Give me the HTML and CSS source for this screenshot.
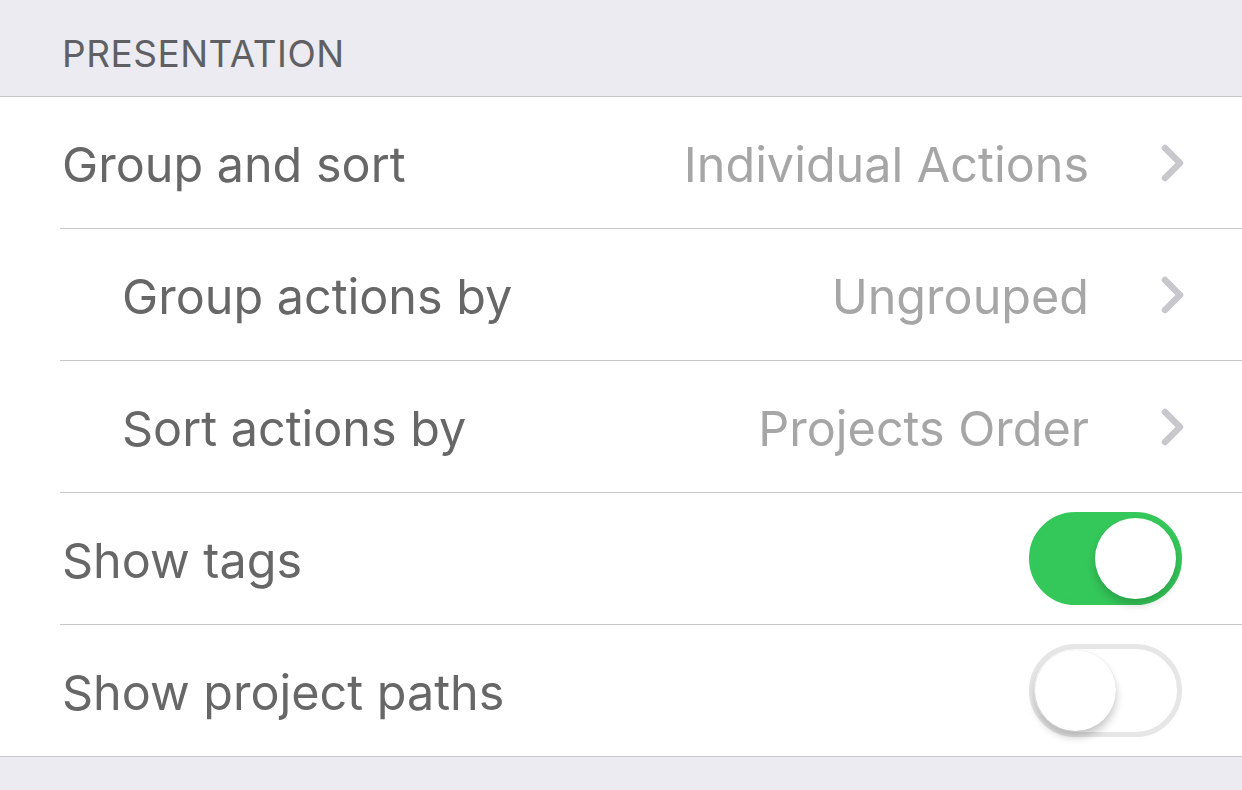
FILE: index.html
```html
<!DOCTYPE html>
<html lang="en">
  <head>
    <meta charset="UTF-8" />
    <meta name="viewport" content="width=device-width, initial-scale=1.0" />
    <title>Presentation</title>
    <link rel="stylesheet" href="styles.css">
  </head>
  <body>
    <div class="sectionHeader">PRESENTATION</div>
    <div class="group">
      <div class="row">
        <span class="label">Group and sort</span>
        <span class="value">Individual Actions</span>
        <svg class="chevron" width="24" height="38" viewBox="0 0 24 38"><path d="M4 4 L19 19 L4 34" /></svg>
      </div>
      <div class="row">
        <span class="label indent">Group actions by</span>
        <span class="value">Ungrouped</span>
        <svg class="chevron" width="24" height="38" viewBox="0 0 24 38"><path d="M4 4 L19 19 L4 34" /></svg>
      </div>
      <div class="row">
        <span class="label indent">Sort actions by</span>
        <span class="value">Projects Order</span>
        <svg class="chevron" width="24" height="38" viewBox="0 0 24 38"><path d="M4 4 L19 19 L4 34" /></svg>
      </div>
      <div class="row">
        <span class="label">Show tags</span>
        <div class="toggle on"><div class="knob"></div></div>
      </div>
      <div class="row">
        <span class="label">Show project paths</span>
        <div class="toggle"><div class="knob"></div></div>
      </div>
    </div>
  </body>
</html>
```

FILE: styles.css
```css
body {
  margin: 0;
  background-color: #ebebf1;
  font-family: "Inter", "Noto Sans", sans-serif;
  height: 100vh;
  overflow: hidden;
}
.sectionHeader {
  height: 96px;
  padding-left: 62px;
  box-sizing: border-box;
  display: flex;
  align-items: flex-end;
  padding-bottom: 20px;
  font-size: 37px;
  color: #5f5f64;
  letter-spacing: 0.5px;
}
.group {
  background-color: white;
  border-top: 1px solid #c8c7cc;
  border-bottom: 1px solid #c8c7cc;
}
.row {
  display: flex;
  align-items: center;
  height: 131px;
  margin-left: 60px;
  padding-left: 2px;
  padding-right: 57px;
  border-bottom: 1px solid #c8c7cc;
}
.row:last-child {
  border-bottom: none;
}
.label {
  flex: 1;
  font-size: 48.5px;
  color: #676767;
  padding-top: 3px;
}
.label.indent {
  padding-left: 60px;
}
.value {
  font-size: 48.5px;
  color: #a6a6a6;
  margin-right: 72px;
  padding-top: 3px;
}
.chevron {
  fill: none;
  stroke: #c7c7cc;
  stroke-width: 6.5;
  stroke-linecap: round;
  stroke-linejoin: round;
}
.toggle {
  width: 153px;
  height: 93px;
  border-radius: 47px;
  box-sizing: border-box;
  border: 5px solid #e6e6e6;
  background-color: white;
  margin-right: 3px;
  display: flex;
  align-items: center;
}
.toggle .knob {
  width: 81px;
  height: 81px;
  border-radius: 50%;
  background-color: white;
  box-shadow: 0 6px 8px rgba(0, 0, 0, 0.22), 0 0 1px rgba(0, 0, 0, 0.15);
  margin-left: 1px;
}
.toggle.on {
  background-color: #34c759;
  border-color: #34c759;
  justify-content: flex-end;
}
.toggle.on .knob {
  margin-left: 0;
  margin-right: 1px;
  box-shadow: 0 6px 8px rgba(0, 0, 0, 0.18);
}
```
